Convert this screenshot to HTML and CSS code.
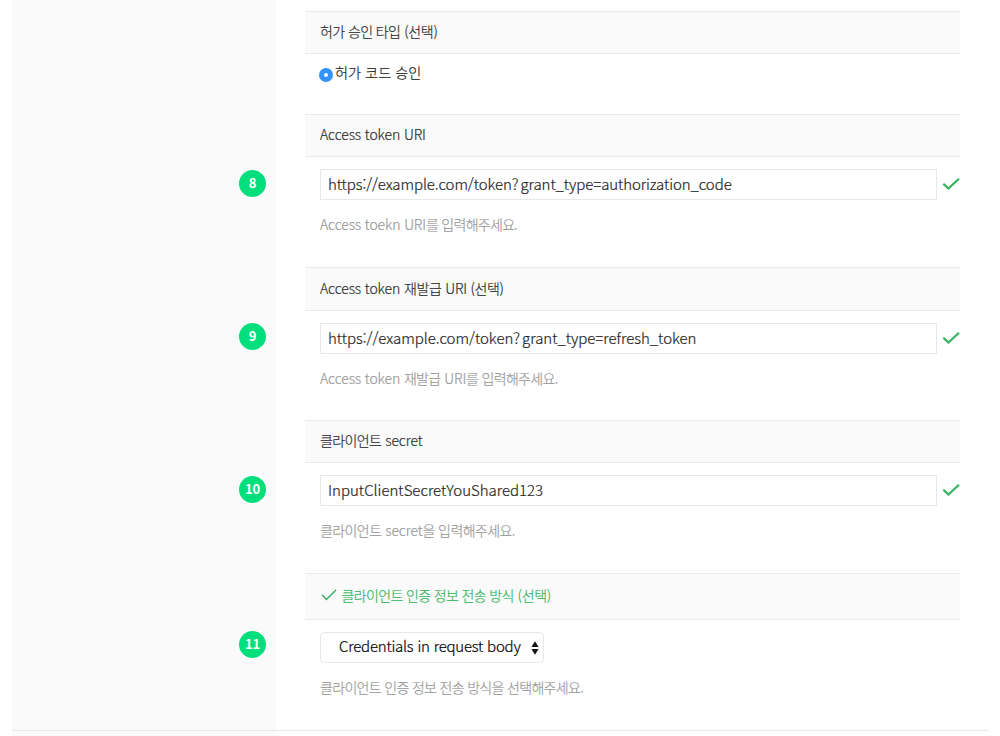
FILE: index.html
```html
<!DOCTYPE html>
<html lang="ko">
<head>
<meta charset="utf-8">
<title>OAuth</title>
<link rel="stylesheet" href="styles.css">
</head>
<body>
<main class="page">
  <section class="row row-type">
    <div class="side"></div>
    <div class="content">
      <h2 class="head"><span class="t1">허가 승인 타입 <span class="opt">(선택)</span></span></h2>
      <label class="radio"><span class="dot"></span><span class="t2">허가 코드 승인</span></label>
    </div>
  </section>
  <section class="row">
    <div class="side"><span class="badge">8</span></div>
    <div class="content">
      <h2 class="head"><span class="en">Access token URI</span></h2>
      <div class="field"><div class="input"><span class="t4">https://example.com/token?<span class="q">grant_type=authorization_code</span></span></div><svg class="check" viewBox="0 0 18 14"><path d="M1.3 6.8 6.4 11.6 17 1.7"/></svg></div>
      <p class="hint"><span class="t5"><span class="en">Access toekn URI</span>를 입력해주세요.</span></p>
    </div>
  </section>
  <section class="row row-tall">
    <div class="side"><span class="badge">9</span></div>
    <div class="content">
      <h2 class="head"><span class="t6"><span class="en">Access token </span>재발급<span class="en"> URI</span> (선택)</span></h2>
      <div class="field"><div class="input"><span class="t7">https://example.com/token?<span class="q">grant_type=refresh_token</span></span></div><svg class="check" viewBox="0 0 18 14"><path d="M1.3 6.8 6.4 11.6 17 1.7"/></svg></div>
      <p class="hint"><span class="t8"><span class="en">Access token </span>재발급<span class="en"> URI</span>를 입력해주세요.</span></p>
    </div>
  </section>
  <section class="row">
    <div class="side"><span class="badge">10</span></div>
    <div class="content">
      <h2 class="head"><span class="t9">클라이언트<span class="en"> secret</span></span></h2>
      <div class="field"><div class="input"><span class="t10">InputClientSecretYouShared123</span></div><svg class="check" viewBox="0 0 18 14"><path d="M1.3 6.8 6.4 11.6 17 1.7"/></svg></div>
      <p class="hint"><span class="t11">클라이언트<span class="en"> secret</span>을 입력해주세요.</span></p>
    </div>
  </section>
  <section class="row row-last">
    <div class="side"><span class="badge">11</span></div>
    <div class="content">
      <h2 class="head done"><svg class="tick" viewBox="0 0 16 12"><path d="M1 5.8 5.4 10.5 15 1"/></svg><span class="t12">클라이언트 인증 정보 전송 방식 <span class="opt">(선택)</span></span></h2>
      <div class="select"><span class="t13">Credentials in request body</span><svg class="arrows" viewBox="0 0 8 14"><path d="M4 .3 7.6 6H.4zM4 13.7 7.6 8H.4z"/></svg></div>
      <p class="hint"><span class="t14">클라이언트 인증 정보 전송 방식을 선택해주세요.</span></p>
    </div>
  </section>
  <footer class="foot"><div class="foot-side"></div></footer>
</main>
</body>
</html>
```
FILE: styles.css
```css
* { box-sizing: border-box; }
body { margin: 0; background: #fff; font-family: "Noto Sans CJK KR", sans-serif; font-weight: 300; color: #2c2c2c; -webkit-text-stroke: .2px currentColor; }
.page { width: 977px; height: 736px; margin-left: 12px; overflow: hidden; }
.row { display: flex; gap: 29px; height: 153px; }
.row-type { height: 114px; }
.row-type .content { padding-top: 11px; }
.row-last { height: 157px; }
.side { width: 264px; background: #fafafa; padding: 56px 10px 0 0; display: flex; justify-content: flex-end; align-items: flex-start; }
.row-last .side { padding-top: 58px; }
.badge { width: 27px; height: 27px; border-radius: 50%; background: #00df7c; color: #fff; font: 700 13px/26px "Noto Sans CJK KR", sans-serif; text-align: center; letter-spacing: -.2px; -webkit-text-stroke: 0; }
.content { width: 655px; white-space: nowrap; }
.head { margin: 0; height: 43px; padding: 0 0 3px 15px; border: solid #e9e9e9; border-width: 1px 0; background: #fafafa; font-size: 14px; font-weight: 300; display: flex; align-items: center; }
.row-tall .head { height: 44px; }
.head.done { height: 47px; padding-bottom: 4px; color: #35b35b; }
.tick { width: 16px; height: 12px; margin: 0 4.5px 0 1px; }
.tick path { fill: none; stroke: #2fae58; stroke-width: 1.3; }
.radio { display: flex; align-items: center; height: 36px; padding-left: 14px; font-size: 14.2px; color: #222; }
.dot { width: 14px; height: 14px; margin: 5px 2px 0 0; border: 5px solid #3492fb; border-radius: 50%; background: #fff; }
.field { display: flex; align-items: center; padding: 12px 0 0 15px; }
.input { width: 617px; height: 31px; border: 1px solid #e8e8e8; background: #fff; padding-left: 7px; font-size: 15px; line-height: 27px; color: #1d1d1d; }
.check { width: 18px; height: 14px; margin: 0 0 1px 5px; }
.check path { fill: none; stroke: #36b35e; stroke-width: 2.2; }
.hint { margin: 13px 0 0 15px; font-size: 14px; line-height: 22px; color: #999; }
.select { margin: 12px 0 0 15px; width: 224px; height: 31px; border: 1px solid #e8e8e8; border-radius: 4px; display: flex; align-items: center; padding: 0 0 4px 18px; font-size: 15px; color: #000; }
.arrows { width: 8px; height: 14px; margin: 4px 4px 0 auto; fill: #111; }
.foot { height: 6px; border-top: 1px solid #e8e8e8; }
.foot-side { width: 264px; height: 5px; background: #fafafa; }
.q { margin-left: 2px; }
.t1 { letter-spacing: -.6px; }
.opt { margin-left: .5px; letter-spacing: -.3px; }
.t4 { letter-spacing: -.09px; }
.t5 { letter-spacing: -.71px; }
.t6 { letter-spacing: -.4px; }
.t7 { letter-spacing: -.03px; }
.t8 { letter-spacing: -.69px; }
.t9 { letter-spacing: -.6px; }
.t11 { letter-spacing: -.59px; }
.t12 { letter-spacing: -.64px; }
.t13 { letter-spacing: -.22px; }
.t14 { letter-spacing: -.68px; }
.en { letter-spacing: -.13px; }
```
